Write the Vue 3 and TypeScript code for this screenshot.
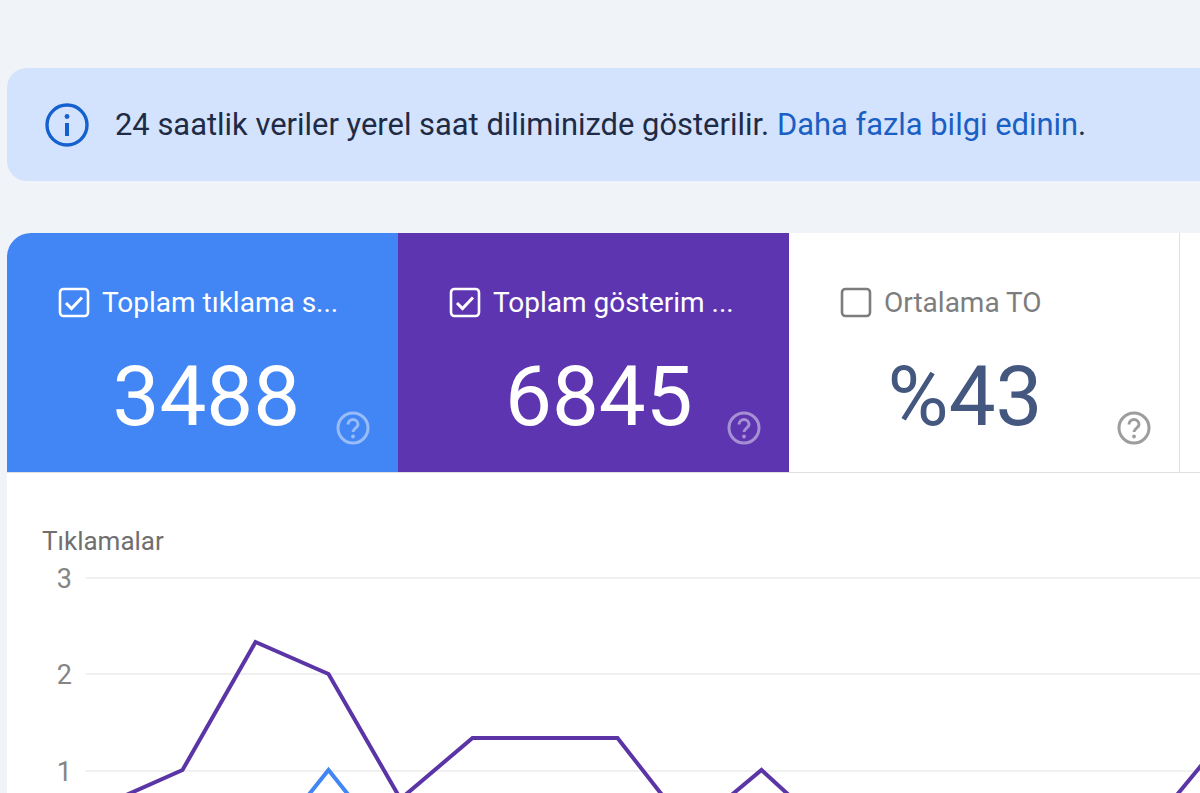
<script setup lang="ts">
interface Tile {
  label: string;
  value: string;
  kind: string;
  checked: boolean;
}

const tiles: Tile[] = [
  { label: "Toplam tıklama s...", value: "3488", kind: "clicks", checked: true },
  { label: "Toplam gösterim ...", value: "6845", kind: "impressions", checked: true },
  { label: "Ortalama TO", value: "%43", kind: "ctr", checked: false },
];

const gridLines = [
  { y: 23, label: "3" },
  { y: 119, label: "2" },
  { y: 216, label: "1" },
];

const toPlot = (pts: number[][]): string =>
  pts.map(([x, y]) => `${x - 6.5},${y - 555}`).join(" ");

const purple = toPlot([
  [110, 802], [182, 770], [255, 642], [328, 674], [400, 799], [472, 738],
  [617, 738], [689, 830], [761, 770], [833, 836], [1125, 857], [1197, 770], [1215, 748],
]);
const blue = toPlot([[288, 820], [328, 770], [368, 820]]);
</script>

<template>
  <main class="page">
    <section class="notice">
      <svg class="notice-icon" viewBox="0 0 46 46" aria-hidden="true">
        <circle cx="23" cy="23" r="20" fill="none" stroke="#1560cf" stroke-width="3.4" />
        <circle cx="23" cy="14.5" r="2.4" fill="#1560cf" />
        <rect x="21" y="21" width="4" height="13" fill="#1560cf" />
      </svg>
      <p class="notice-text">
        24 saatlik veriler yerel saat diliminizde gösterilir.
        <a class="notice-link">Daha fazla bilgi edinin</a>.
      </p>
    </section>

    <section class="report">
      <div class="tiles">
        <article v-for="tile in tiles" :key="tile.kind" class="tile" :class="tile.kind">
          <div class="tile-label">
            <svg class="check" viewBox="0 0 32 32" aria-hidden="true">
              <rect x="2" y="2" width="28" height="27" rx="3.5" fill="none" stroke="currentColor" stroke-width="2.6" />
              <path v-if="tile.checked" d="M8 16l5.5 5.5L24 10.5" fill="none" stroke="currentColor" stroke-width="3" />
            </svg>
            <span class="label-text">{{ tile.label }}</span>
          </div>
          <div class="tile-value">
            <span class="value-text">{{ tile.value }}</span>
            <svg class="help" viewBox="0 0 34 34" aria-hidden="true">
              <circle cx="17" cy="17" r="15" fill="none" stroke="currentColor" stroke-width="3" />
              <path d="M12 13.5a5 5 0 0 1 10 0c0 3.6-5 3.6-5 7.5" fill="none" stroke="currentColor" stroke-width="3" />
              <circle cx="17" cy="25.5" r="1.9" fill="currentColor" />
            </svg>
          </div>
        </article>
        <article class="tile empty"></article>
      </div>

      <div class="chart">
        <h2 class="chart-title">Tıklamalar</h2>
        <svg class="plot" viewBox="0 0 1194 238" width="1194" height="238">
          <g v-for="line in gridLines" :key="line.label">
            <line x1="78.5" :y1="line.y" x2="1194" :y2="line.y" stroke="#f0f0f0" stroke-width="2" />
            <text x="65" :y="line.y + 10" text-anchor="end" class="axis-label">{{ line.label }}</text>
          </g>
          <polyline :points="blue" fill="none" stroke="#4285f4" stroke-width="4" />
          <polyline :points="purple" fill="none" stroke="#5b35a6" stroke-width="4" />
        </svg>
      </div>
    </section>
  </main>
</template>

<style>
html,
body {
  margin: 0;
  height: 100%;
  overflow: hidden;
}
</style>

<style scoped>
.page {
  height: 793px;
  overflow: hidden;
  box-sizing: border-box;
  padding: 68px 0 0 6.5px;
  background: #f0f4f9;
  font-family: Roboto, "Liberation Sans", sans-serif;
}

.notice {
  display: flex;
  align-items: center;
  gap: 25px;
  height: 113px;
  box-sizing: border-box;
  padding-left: 37.5px;
  margin-bottom: 52px;
  border-radius: 20px 0 0 20px;
  background: #d3e3fd;
}

.notice-icon {
  flex: none;
  width: 46px;
  height: 46px;
}

.notice-text {
  margin: 0;
  font-size: 30.9px;
  line-height: 36px;
  color: #1f2b45;
  white-space: nowrap;
}

.notice-link {
  color: #1a5fc4;
}

.report {
  background: #ffffff;
  border-top-left-radius: 24px;
  overflow: hidden;
}

.tiles {
  display: flex;
  height: 240px;
  box-sizing: border-box;
  border-bottom: 1px solid #e0e0e0;
}

.tile {
  flex: none;
  width: 391px;
  box-sizing: border-box;
  padding: 54px 28px 0 51.5px;
}

.tile.ctr {
  border-right: 1px solid #e0e0e0;
  color: #7d7d7d;
}

.tile.clicks {
  background: #4285f4;
  color: #ffffff;
}

.tile.impressions {
  background: #5e35b1;
  color: #ffffff;
}

.tile-label {
  display: flex;
  align-items: center;
  gap: 12px;
  height: 32px;
}

.check {
  flex: none;
  width: 32px;
  height: 32px;
}

.label-text {
  white-space: nowrap;
  font-size: 28px;
  line-height: 32px;
}

.tile-value {
  display: flex;
  justify-content: space-between;
  align-items: flex-end;
  margin-top: 30px;
  height: 96px;
}

.value-text {
  font-size: 83.5px;
  line-height: 96px;
  margin-left: 54.5px;
}

.impressions .value-text {
  margin-left: 56px;
}

.ctr .value-text {
  margin-left: 47.5px;
  color: #44577f;
}

.help {
  flex: none;
  width: 34px;
  height: 34px;
  opacity: 0.45;
}

.ctr .help {
  opacity: 0.75;
}

.chart {
  padding-top: 54px;
}

.chart-title {
  margin: 0 0 0 35.5px;
  font-size: 26px;
  line-height: 28px;
  font-weight: 400;
  color: #6f6f6f;
}

.plot {
  display: block;
}

.axis-label {
  font-size: 27px;
  fill: #858585;
  font-family: Roboto, "Liberation Sans", sans-serif;
}
</style>
